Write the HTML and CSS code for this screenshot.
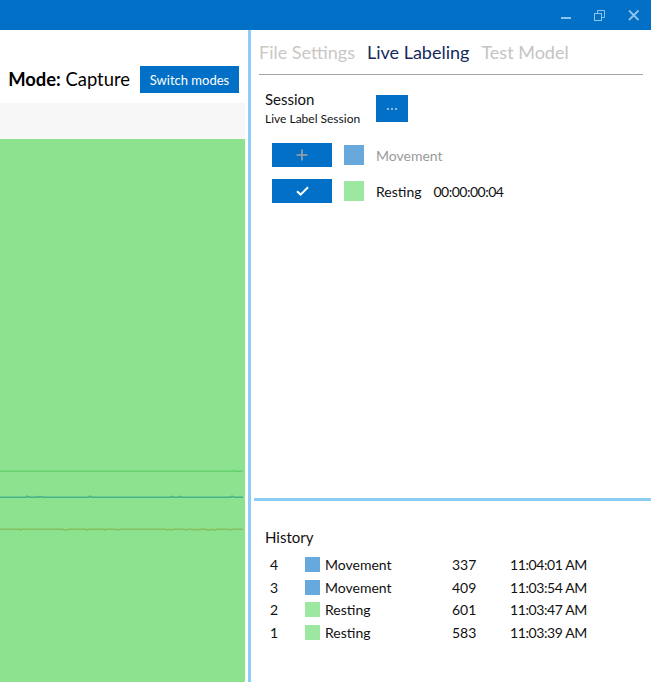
FILE: index.html
```html
<!DOCTYPE html>
<html>
<head>
<meta charset="utf-8">
<link rel="stylesheet" href="styles.css">
</head>
<body>
<div class="app">
  <div class="titlebar">
    <svg class="ctl" width="34" height="30" viewBox="0 0 34 30"><rect x="12" y="17" width="10" height="2" fill="#8fc3ea"/></svg>
    <svg class="ctl" width="34" height="30" viewBox="0 0 34 30"><g fill="none" stroke="#8fc3ea" stroke-width="1"><rect x="11.5" y="13.5" width="7" height="7"/><path d="M14.5 13.5v-3h7v7h-3"/></g></svg>
    <svg class="ctl" width="34" height="30" viewBox="0 0 34 30"><path d="M12 10.5l9.5 9.5M21.5 10.5L12 20" stroke="#8fc3ea" stroke-width="1.8"/></svg>
  </div>
  <div class="main">
    <div class="left">
      <div class="modebar">
        <span class="mode"><b>Mode:</b> Capture</span>
        <button class="btn switch">Switch modes</button>
      </div>
      <div class="graybar"></div>
      <div class="chart">
        <svg width="245" height="543" viewBox="0 0 245 543">
          <polyline fill="none" stroke="#64d26c" stroke-width="1.5" points="0,332.3 232,332.3 233,331.5 235,332.3 243,332.3"/>
          <polyline fill="none" stroke="#47b28a" stroke-width="1.6" points="0,358.3 26,358.3 27,357.3 29,358.3 36,358.3 37,357.5 39,358.3 41,357.5 43,358.3 89,358.3 90,357.3 92,358.3 171,358.3 172,357.4 174,358.3 179,358.3 180,357.4 182,358.3 231,358.3 232,357.3 234,358.3 243,358.3"/>
          <polyline fill="none" stroke="#86c05e" stroke-width="1.6" points="0,390.3 20,390.3 21,391 22,390.3 63,390.3 64,391 67,391 68,390.3 86,390.3 87,391 89,390.3 104,390.3 105,391 106,390.3 116,390.3 118,391 121,390.3 165,390.3 167,391 169,390.3 172,391 174,390.3 184,390.3 187,391 188,390.3 192,390.3 194,391 196,390.3 198,391 200,390.3 206,390.3 207,391 210,391 212,390.3 215,391 217,390.3 228,390.3 230,391 232,390.3 243,390.3"/>
        </svg>
      </div>
    </div>
    <div class="gap"></div>
    <div class="vdiv"></div>
    <div class="right">
      <div class="top">
        <div class="tabs">
          <span class="tab off">File Settings</span>
          <span class="tab on">Live Labeling</span>
          <span class="tab off2">Test Model</span>
        </div>
        <div class="session">
          <div class="session-text">
            <div class="session-title">Session</div>
            <div class="session-name">Live Label Session</div>
          </div>
          <button class="btn dots"><svg width="12" height="4" viewBox="0 0 12 4"><circle cx="2" cy="2" r="1.1" fill="#b4c8dc"/><circle cx="6" cy="2" r="1.1" fill="#b4c8dc"/><circle cx="10" cy="2" r="1.1" fill="#b4c8dc"/></svg></button>
        </div>
        <div class="labels">
          <div class="lrow">
            <button class="btn lbtn"><svg width="12" height="12" viewBox="0 0 12 12"><path d="M6 0.5v11M0.5 6h11" stroke="#a3a3a3" stroke-width="1.6"/></svg></button>
            <span class="sw blue"></span>
            <span class="lname muted">Movement</span>
          </div>
          <div class="lrow">
            <button class="btn lbtn"><svg width="13" height="10" viewBox="0 0 13 10"><path d="M1 5.2l3.6 3.4L12 1.2" fill="none" stroke="#fff" stroke-width="2"/></svg></button>
            <span class="sw green"></span>
            <span class="lname">Resting</span>
            <span class="ltime">00:00:00:04</span>
          </div>
        </div>
      </div>
      <div class="hdiv"></div>
      <div class="history">
        <div class="htitle">History</div>
        <div class="hgrid">
          <span>4</span><span class="hsw blue"></span><span>Movement</span><span>337</span><span class="ht">11:04:01 AM</span>
          <span>3</span><span class="hsw blue"></span><span>Movement</span><span>409</span><span class="ht">11:03:54 AM</span>
          <span>2</span><span class="hsw green"></span><span>Resting</span><span>601</span><span class="ht">11:03:47 AM</span>
          <span>1</span><span class="hsw green"></span><span>Resting</span><span>583</span><span class="ht">11:03:39 AM</span>
        </div>
      </div>
    </div>
  </div>
</div>
</body>
</html>
```

FILE: styles.css
```css
* { box-sizing: border-box; }
html, body { margin: 0; padding: 0; background: #fff; }
body { font-family: "Lato", "Open Sans", sans-serif; color: #1a1a1a; }
.app { width: 651px; height: 682px; display: flex; flex-direction: column; overflow: hidden; }
.titlebar { height: 30px; background: #0170c6; display: flex; justify-content: flex-end; padding-right: 0; }
.ctl { display: block; }
.main { flex: 1; display: flex; min-height: 0; }
.left { width: 245px; display: flex; flex-direction: column; }
.modebar { height: 73px; display: flex; align-items: flex-end; justify-content: flex-end; padding: 0 6px 10px 0; gap: 10px; }
.mode { font-size: 18.4px; line-height: 27px; color: #000; white-space: nowrap; }
.mode b { font-weight: 700; }
.btn { border: 0; margin: 0; padding: 0; background: #0170c6; color: #fff; font-family: inherit; display: flex; align-items: center; justify-content: center; }
.switch { width: 99px; height: 27px; font-size: 13px; }
.graybar { height: 36px; background: #f7f7f7; }
.chart { flex: 1; background: #8ce28e; }
.chart svg { display: block; }
.gap { width: 3px; background: #fff; }
.vdiv { width: 3px; background: #8bcdf4; }
.right { flex: 1; display: flex; flex-direction: column; }
.top { height: 468px; }
.tabs { margin: 0 8px; padding-top: 10px; padding-bottom: 10px; border-bottom: 1px solid #a3a3a3; display: flex; gap: 12px; font-size: 18px; line-height: 24px; white-space: nowrap; }
.tab.off { color: #cbc7c4; }
.tab.on { color: #152a5c; }
.tab.off2 { color: #c4c4c4; }
.session { display: flex; padding-left: 14px; margin-top: 15px; }
.session-text { width: 111px; }
.session-title { font-size: 15px; line-height: 18px; color: #111; }
.session-name { font-size: 12px; line-height: 15px; margin-top: 3px; color: #111; }
.dots { width: 32px; height: 27px; margin-top: 5px; }
.labels { margin-top: 17px; padding-left: 21px; display: flex; flex-direction: column; gap: 12px; }
.lrow { display: flex; align-items: center; height: 24px; }
.lbtn { width: 60px; height: 24px; }
.sw { width: 20px; height: 20px; margin-left: 12px; }
.blue { background: #67a9dc; }
.green { background: #9de8a1; }
.lname { margin-left: 12px; font-size: 14px; color: #111; }
.lname.muted { color: #9a9a9a; }
.ltime { margin-left: 12px; font-size: 14px; letter-spacing: -0.5px; color: #111; }
.hdiv { height: 3px; margin-left: 3px; background: #8bcdf4; }
.history { padding: 27px 0 0 14px; }
.htitle { font-size: 15px; line-height: 18px; color: #111; }
.hgrid { margin-top: 7px; margin-left: 5px; display: grid; grid-template-columns: 35px 20px 127px 58px auto; grid-auto-rows: 22.7px; align-items: center; font-size: 14px; color: #111; }
.ht { letter-spacing: -0.4px; }
.hsw { width: 15px; height: 15px; }
```
